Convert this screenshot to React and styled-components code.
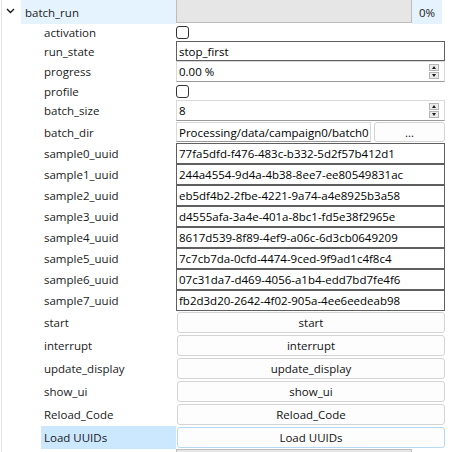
import React from "react";
import styled, { createGlobalStyle } from "styled-components";

const GlobalStyle = createGlobalStyle`
  html, body {
    margin: 0;
    padding: 0;
    background: #ffffff;
  }
  body {
    font-family: "Open Sans", "Noto Sans", sans-serif;
    font-size: 11.5px;
    color: #000000;
  }
`;

const Tree = styled.div`
  width: 450px;
  height: 452px;
  overflow: hidden;
  box-sizing: border-box;
  border-left: 1px solid #e3e3e3;
  margin-left: 1px;
  background: #ffffff;
`;

const Row = styled.div`
  display: grid;
  grid-template-columns: 174px 269px;
  height: ${(p) => p.h}px;
`;

const LabelCell = styled.div`
  display: flex;
  align-items: center;
  margin-left: ${(p) => (p.top ? 19 : 39)}px;
  padding-left: ${(p) => (p.top ? 4 : 3)}px;
  background: ${(p) => p.bg || "transparent"};
  white-space: nowrap;
  color: #1a1a1a;
  position: relative;
`;

const Chevron = styled.svg`
  position: absolute;
  left: -15px;
  top: 8px;
`;

const ValueCell = styled.div`
  display: flex;
  align-items: center;
  background: ${(p) => p.bg || "transparent"};
`;

const PercentCell = styled.div`
  align-self: stretch;
  width: 30px;
  display: flex;
  align-items: center;
  background: #e5f3ff;
`;

const ProgressBar = styled.div`
  flex: 0 0 236px;
  height: ${(p) => p.h || 23}px;
  align-self: flex-start;
  box-sizing: border-box;
  background: #e6e6e6;
  border: 1px solid #bcbcbc;
  border-top: ${(p) => (p.cut ? "1px solid #bcbcbc" : "none")};
`;

const Percent = styled.span`
  padding-left: 7px;
  color: #1a1a1a;
`;

const CheckBox = styled.div`
  width: 11px;
  height: 11px;
  border: 1px solid #333333;
  border-radius: 3px;
  background: #ffffff;
`;

const LineEdit = styled.div`
  flex: 1;
  height: ${(p) => p.h || 19}px;
  box-sizing: border-box;
  display: flex;
  align-items: center;
  padding-left: 2px;
  border: 1px solid ${(p) => (p.dark ? "#5f5f5f" : "#d9d9d9")};
  border-bottom-color: ${(p) => (p.dark ? "#5f5f5f" : "#9a9a9a")};
  background: #ffffff;
  white-space: nowrap;
  overflow: hidden;
`;

const SpinBox = styled(LineEdit)`
  justify-content: space-between;
  padding-right: 5px;
`;

const SpinButtons = styled.div`
  display: flex;
  flex-direction: column;
  gap: 1px;
`;

const SpinArrow = styled.div`
  width: 10px;
  height: 7px;
  box-sizing: border-box;
  border: 1px solid #b4b4b4;
  background: #ececec;
  display: flex;
  align-items: center;
  justify-content: center;
`;

const Triangle = styled.div`
  width: 0;
  height: 0;
  border-left: 2.5px solid transparent;
  border-right: 2.5px solid transparent;
  ${(p) =>
    p.down
      ? "border-top: 3px solid #1a1a1a;"
      : "border-bottom: 3px solid #1a1a1a;"}
`;

const DirRow = styled.div`
  flex: 1;
  display: flex;
  gap: 2px;
  align-items: center;
`;

const PushButton = styled.div`
  flex: ${(p) => (p.small ? "0 0 71px" : "1")};
  height: ${(p) => (p.small ? 20 : 21)}px;
  box-sizing: border-box;
  display: flex;
  align-items: center;
  justify-content: center;
  margin-left: 1px;
  border: 1px solid ${(p) => (p.active ? "#b5d8f5" : "#d4d4d4")};
  border-radius: 3px;
  background: #fdfdfd;
  color: #111111;
  white-space: nowrap;
`;

const Spin = () => (
  <SpinButtons>
    <SpinArrow>
      <Triangle />
    </SpinArrow>
    <SpinArrow>
      <Triangle down />
    </SpinArrow>
  </SpinButtons>
);

const uuids = [
  "77fa5dfd-f476-483c-b332-5d2f57b412d1",
  "244a4554-9d4a-4b38-8ee7-ee80549831ac",
  "eb5df4b2-2fbe-4221-9a74-a4e8925b3a58",
  "d4555afa-3a4e-401a-8bc1-fd5e38f2965e",
  "8617d539-8f89-4ef9-a06c-6d3cb0649209",
  "7c7cb7da-0cfd-4474-9ced-9f9ad1c4f8c4",
  "07c31da7-d469-4056-a1b4-edd7bd7fe4f6",
  "fb2d3d20-2642-4f02-905a-4ee6eedeab98",
];

const buttons = [
  "start",
  "interrupt",
  "update_display",
  "show_ui",
  "Reload_Code",
  "Load UUIDs",
];

export default function App() {
  return (
    <>
      <GlobalStyle />
      <Tree>
        <Row h={24}>
          <LabelCell top bg="#e5f3ff">
            <Chevron width="9" height="6" viewBox="0 0 9 6">
              <path d="M1 1 L4.5 4.5 L8 1" fill="none" stroke="#1a1a1a" strokeWidth="1.4" />
            </Chevron>
            batch_run
          </LabelCell>
          <ValueCell>
            <ProgressBar />
            <PercentCell>
              <Percent>0%</Percent>
            </PercentCell>
          </ValueCell>
        </Row>
        <Row h={17}>
          <LabelCell>activation</LabelCell>
          <ValueCell>
            <CheckBox />
          </ValueCell>
        </Row>
        <Row h={20}>
          <LabelCell>run_state</LabelCell>
          <ValueCell>
            <LineEdit dark h={20}>stop_first</LineEdit>
          </ValueCell>
        </Row>
        <Row h={21}>
          <LabelCell>progress</LabelCell>
          <ValueCell>
            <SpinBox h={21}>
              0.00 %
              <Spin />
            </SpinBox>
          </ValueCell>
        </Row>
        <Row h={18}>
          <LabelCell>profile</LabelCell>
          <ValueCell>
            <CheckBox />
          </ValueCell>
        </Row>
        <Row h={21}>
          <LabelCell>batch_size</LabelCell>
          <ValueCell>
            <SpinBox h={21}>
              8
              <Spin />
            </SpinBox>
          </ValueCell>
        </Row>
        <Row h={22}>
          <LabelCell>batch_dir</LabelCell>
          <ValueCell>
            <DirRow>
              <LineEdit h={20}>Processing/data/campaign0/batch0</LineEdit>
              <PushButton small>...</PushButton>
            </DirRow>
          </ValueCell>
        </Row>
        {uuids.map((u, i) => (
          <Row h={21} key={u}>
            <LabelCell>{`sample${i}_uuid`}</LabelCell>
            <ValueCell>
              <LineEdit dark h={21}>{u}</LineEdit>
            </ValueCell>
          </Row>
        ))}
        {buttons.map((b, i) => (
          <Row h={23} key={b}>
            <LabelCell bg={i === buttons.length - 1 ? "#cce8ff" : undefined}>{b}</LabelCell>
            <ValueCell>
              <PushButton active={i === buttons.length - 1}>{b}</PushButton>
            </ValueCell>
          </Row>
        ))}
        <Row h={10}>
          <LabelCell />
          <ValueCell>
            <ProgressBar cut h={10} />
          </ValueCell>
        </Row>
      </Tree>
    </>
  );
}
